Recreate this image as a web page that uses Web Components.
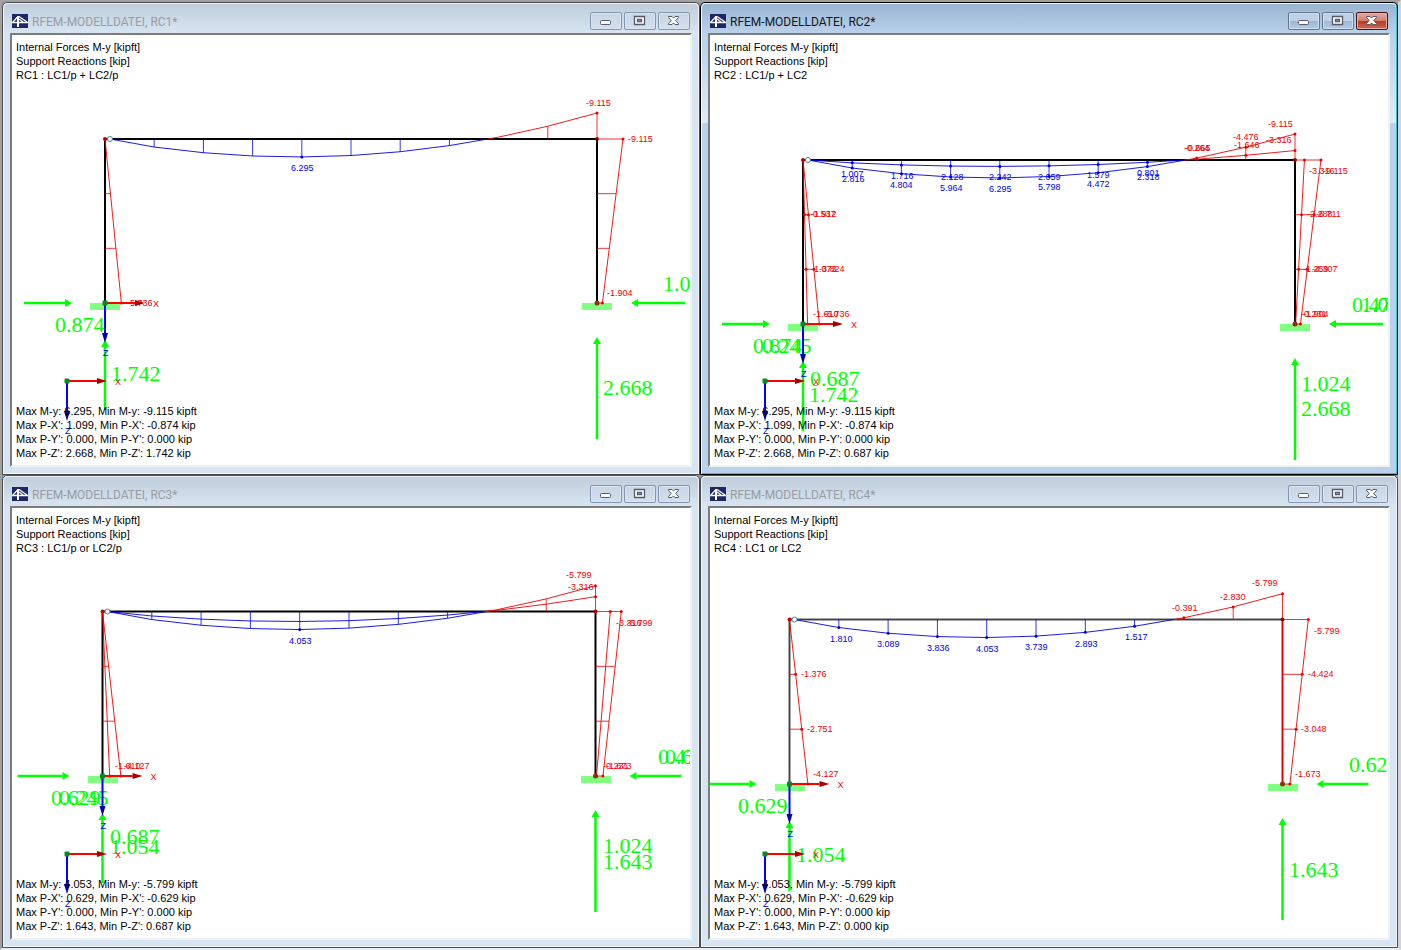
<!DOCTYPE html>
<html lang="en">
<head>
<meta charset="utf-8">
<title>RFEM – Result combinations</title>
<style>
  body {
    margin: 0;
    font: 11px/14px "Liberation Sans", Arial, sans-serif;
    color: #000;
  }
</style>
</head>
<body>
<mdi-desktop>
  <mdi-window heading="RFEM-MODELLDATEI, RC1*">
    <force-diagram slot="drawing" model="RC1"></force-diagram>
    <info-lines slot="top">
      <div>Internal Forces M-y [kipft]</div>
      <div>Support Reactions [kip]</div>
      <div>RC1 : LC1/p + LC2/p</div>
    </info-lines>
    <info-lines slot="bottom">
      <div>Max M-y: 6.295, Min M-y: -9.115 kipft</div>
      <div>Max P-X': 1.099, Min P-X': -0.874 kip</div>
      <div>Max P-Y': 0.000, Min P-Y': 0.000 kip</div>
      <div>Max P-Z': 2.668, Min P-Z': 1.742 kip</div>
    </info-lines>
  </mdi-window>
  <mdi-window heading="RFEM-MODELLDATEI, RC2*" active>
    <force-diagram slot="drawing" model="RC2"></force-diagram>
    <info-lines slot="top">
      <div>Internal Forces M-y [kipft]</div>
      <div>Support Reactions [kip]</div>
      <div>RC2 : LC1/p + LC2</div>
    </info-lines>
    <info-lines slot="bottom">
      <div>Max M-y: 6.295, Min M-y: -9.115 kipft</div>
      <div>Max P-X': 1.099, Min P-X': -0.874 kip</div>
      <div>Max P-Y': 0.000, Min P-Y': 0.000 kip</div>
      <div>Max P-Z': 2.668, Min P-Z': 0.687 kip</div>
    </info-lines>
  </mdi-window>
  <mdi-window heading="RFEM-MODELLDATEI, RC3*">
    <force-diagram slot="drawing" model="RC3"></force-diagram>
    <info-lines slot="top">
      <div>Internal Forces M-y [kipft]</div>
      <div>Support Reactions [kip]</div>
      <div>RC3 : LC1/p or LC2/p</div>
    </info-lines>
    <info-lines slot="bottom">
      <div>Max M-y: 4.053, Min M-y: -5.799 kipft</div>
      <div>Max P-X': 0.629, Min P-X': -0.629 kip</div>
      <div>Max P-Y': 0.000, Min P-Y': 0.000 kip</div>
      <div>Max P-Z': 1.643, Min P-Z': 0.687 kip</div>
    </info-lines>
  </mdi-window>
  <mdi-window heading="RFEM-MODELLDATEI, RC4*">
    <force-diagram slot="drawing" model="RC4"></force-diagram>
    <info-lines slot="top">
      <div>Internal Forces M-y [kipft]</div>
      <div>Support Reactions [kip]</div>
      <div>RC4 : LC1 or LC2</div>
    </info-lines>
    <info-lines slot="bottom">
      <div>Max M-y: 4.053, Min M-y: -5.799 kipft</div>
      <div>Max P-X': 0.629, Min P-X': -0.629 kip</div>
      <div>Max P-Y': 0.000, Min P-Y': 0.000 kip</div>
      <div>Max P-Z': 1.643, Min P-Z': 0.000 kip</div>
    </info-lines>
  </mdi-window>
</mdi-desktop>

<template id="desktop-tpl">
  <style>
    :host {
      display: grid;
      grid-template-columns: repeat(2, minmax(0, 1fr));
      grid-template-rows: repeat(2, minmax(0, 1fr));
      box-sizing: border-box;
      height: 100vh;
      border: 2px solid #a0a0a0;
      border-right: 3px solid #d2d4dc;
      border-bottom-color: #eeeeee;
      background: #8d959e;
    }
  </style>
  <slot></slot>
</template>

<template id="window-tpl">
  <style>
    :host {
      --edge: #4c4c4c;
      --shine: #eef4fa;
      --bar-top: #bfcddb;
      --bar-end: #d7e4f2;
      --frame: #d7e4f2;
      --side: linear-gradient(var(--frame), var(--frame));
      --caption: #999ca0;
      display: flex;
      flex-direction: column;
      box-sizing: border-box;
      min-width: 0;
      min-height: 0;
      padding: 0 7px 7px;
      border: 1px solid var(--edge);
      border-radius: 5px 5px 0 0;
      box-shadow: inset 0 0 0 1px var(--shine);
      background: var(--side) top / 100% 120px no-repeat, var(--frame);
    }
    :host([active]) {
      --edge: #000000;
      --bar-top: #99b4d1;
      --bar-end: #b9d1ea;
      --frame: #b9d1ea;
      --side: linear-gradient(#99b4d1, #b9d1ea 32px, #dfeaf6);
      --caption: #101820;
      box-shadow: inset 1px 1px 0 0 #f4f8fc, inset -1px -1px 0 0 #26c6dc;
    }
    header {
      display: flex;
      align-items: flex-start;
      gap: 2px;
      box-sizing: border-box;
      flex: none;
      height: 30px;
      margin: 0 -6px;
      padding: 9px 8px 0 8px;
      border-radius: 4px 4px 0 0;
      background: linear-gradient(var(--bar-top), var(--bar-end));
      box-shadow: inset 0 1px 0 0 var(--shine);
    }
    .logo { flex: none; width: 16px; height: 14px; margin: 2px 2px 0 0; }
    h2 {
      flex: 1;
      min-width: 0;
      margin: 0;
      overflow: hidden;
      white-space: nowrap;
      font: 12px/20px Roboto, "Open Sans", sans-serif;
      color: var(--caption);
    }
    main {
      display: grid;
      flex: 1;
      grid-template: minmax(0, 1fr) / minmax(0, 1fr);
      min-height: 0;
      margin: 0;
      border: 2px solid;
      border-color: #7c7c7c #f1f1f1 #f1f1f1 #7c7c7c;
      background: #fff;
      overflow: hidden;
    }
    ::slotted(force-diagram) { grid-area: 1 / 1; }
    .notes {
      grid-area: 1 / 1;
      display: flex;
      flex-direction: column;
      justify-content: space-between;
      padding: 5px 4px;
      z-index: 1;
    }
  </style>
  <header>
    <svg class="logo" viewBox="0 0 16 14" aria-hidden="true">
      <rect width="16" height="14" fill="#1f2566"/>
      <path d="M0.500 8.500L6 2.500M7 2.500L15 8M7 5L11 8" stroke="#fff" stroke-width="1.200" fill="none"/>
      <path d="M0 8.500H16" stroke="#fff" stroke-width="1.500"/>
      <path d="M6 2V13" stroke="#fff" stroke-width="2"/>
    </svg>
    <h2></h2>
    <caption-button kind="minimize"></caption-button>
    <caption-button kind="restore"></caption-button>
    <caption-button kind="close"></caption-button>
  </header>
  <main>
    <slot name="drawing"></slot>
    <div class="notes"><slot name="top"></slot><slot name="bottom"></slot></div>
  </main>
</template>

<template id="info-tpl">
  <style>
    :host { display: block; white-space: nowrap; }
  </style>
  <slot></slot>
</template>

<template id="button-tpl">
  <style>
    :host { display: block; flex: none; }
    button {
      display: block;
      box-sizing: border-box;
      width: 32px;
      height: 18px;
      padding: 0;
      border: 1px solid #8496b2;
      border-radius: 2px;
      background: linear-gradient(#c7d5e4, #d3e0ee);
      box-shadow: inset 0 0 0 1px #d9e4f0;
    }
    :host([hot]) button {
      border-color: #64748c;
      background: linear-gradient(#bdd0e5 48%, #9bb7d4 52%, #b3cce6);
      box-shadow: inset 0 0 0 1px #cfdff0;
    }
    :host([hot][kind="close"]) button {
      border-color: #43141a;
      background: linear-gradient(#e0a297 10%, #d4806f 48%, #b83b22 52%, #cf6a50);
      box-shadow: inset 0 0 0 1px #e3aea4;
    }
    svg { display: block; width: 30px; height: 16px; }
  </style>
  <button type="button"></button>
</template>

<template id="diagram-tpl">
  <style>
    :host { display: block; min-width: 0; min-height: 0; }
    svg { display: block; width: 100%; height: 100%; }
    text { font: 9px "Liberation Sans", Arial, sans-serif; }
    .r { fill: #f00000; }
    .b { fill: #0000f0; }
    .g { fill: #00ff00; font: 22px "Liberation Serif", "Times New Roman", serif; }
  </style>
</template>

<script>
const stamp = (host, id) => {
  const root = host.attachShadow({ mode: "open" });
  root.append(document.getElementById(id).content.cloneNode(true));
  return root;
};

class MdiDesktop extends HTMLElement {
  constructor() { super(); stamp(this, "desktop-tpl"); }
}

class InfoLines extends HTMLElement {
  constructor() { super(); stamp(this, "info-tpl"); }
}

const GLYPHS = {
  minimize: '<rect x="9.500" y="7.500" width="10" height="4" rx="1" fill="#fff" stroke="#555a6c"/>',
  restore: '<path fill="#fff" fill-rule="evenodd" stroke="#555a6c" stroke-width="1.300" d="M9.500 3.500h10v8h-10zM12.500 6.500h4v2h-4z"/>',
  close: '<path fill="#fff" stroke="#555a6c" stroke-linejoin="round" d="M9.500 3.500H13L14.500 5L16 3.500H19.500V4.500L16.700 7.500L19.500 10.500V11.500H16L14.500 10L13 11.500H9.500V10.500L12.300 7.500L9.500 4.500z"/>'
};

class CaptionButton extends HTMLElement {
  constructor() { super(); this.root = stamp(this, "button-tpl"); }
  connectedCallback() {
    const kind = this.getAttribute("kind");
    const button = this.root.querySelector("button");
    button.setAttribute("aria-label", kind);
    button.innerHTML = `<svg viewBox="0 0 30 16" aria-hidden="true">${GLYPHS[kind]}</svg>`;
  }
}

class MdiWindow extends HTMLElement {
  constructor() { super(); this.root = stamp(this, "window-tpl"); }
  connectedCallback() {
    this.root.querySelector("h2").textContent = this.getAttribute("heading");
    for (const b of this.root.querySelectorAll("caption-button"))
      b.toggleAttribute("hot", this.hasAttribute("active"));
  }
}

/* Beam moments at the ten stations after the hinge, in kipft */
const FULL = [2.816, 4.804, 5.964, 6.295, 5.798, 4.472, 2.318, -0.665, -4.476, -9.115];
const LIVE = [1.810, 3.089, 3.836, 4.053, 3.739, 2.893, 1.517, -0.391, -2.830, -5.799];
const DEAD = [1.007, 1.716, 2.128, 2.242, 2.059, 1.579, 0.801, -0.264, -1.646, -3.316];

/* left: moment at the foot; right: moments at the head and the foot */
const MODELS = {
  RC1: {
    x: 93, y: 104, span: 492, height: 164, scale: 2.85,
    curves: [{ beam: FULL, left: 5.736, right: [9.115, 1.904] }],
    tails: [-81, 88],
    labels: {
      b: [[279, 136, "6.295"]],
      r: [[574, 71, "-9.115"], [616, 107, "-9.115"], [595, 261, "-1.904"], [115, 271, "-5.736"]],
      g: [[43, 297, "0.874"], [99, 346, "1.742"], [591, 360, "2.668"], [651, 256, "1.099"]]
    }
  },
  RC2: {
    x: 93, y: 125, span: 492, height: 164, scale: 2.85, dots: true,
    curves: [{ beam: FULL, left: 5.736, right: [9.115, 1.904] }, { beam: DEAD, left: 1.610, right: [3.316, 0.231] }],
    tails: [-81, 88],
    labels: {
      b: [[131, 142, "1.007"], [132, 147, "2.816"], [181, 144, "1.716"], [180, 153, "4.804"],
          [231, 145, "2.128"], [230, 156, "5.964"], [279, 145, "2.242"], [279, 157, "6.295"],
          [328, 145, "2.059"], [328, 155, "5.798"], [377, 143, "1.579"], [377, 152, "4.472"],
          [427, 141, "0.801"], [427, 145, "2.318"]],
      r: [[474, 116, "-0.264"], [475, 116, "-0.665"], [523, 105, "-4.476"], [524, 113, "-1.646"],
          [558, 92, "-9.115"], [556, 108, "-3.316"], [599, 139, "-3.316"], [613, 139, "-9.115"],
          [597, 182, "-2.288"], [606, 182, "-6.711"], [593, 237, "-1.259"], [602, 237, "-4.307"],
          [591, 282, "-0.231"], [593, 282, "-1.904"], [100, 182, "-0.537"], [101, 182, "-1.912"],
          [101, 237, "-1.073"], [109, 237, "-3.824"], [103, 282, "-1.610"], [114, 282, "-5.736"]],
      g: [[43, 318, "0.874"], [52, 318, "0.245"], [100, 351, "0.687"], [99, 367, "1.742"],
          [591, 356, "1.024"], [591, 381, "2.668"], [642, 277, "0.477"], [651, 277, "1.099"]]
    }
  },
  RC3: {
    x: 90.5, y: 103.5, span: 493, height: 164.5, scale: 4.45,
    curves: [{ beam: LIVE, left: 4.127, right: [5.799, 1.673] }, { beam: DEAD, left: 1.610, right: [3.316, 0.231] }],
    tails: [-85, 86],
    labels: {
      b: [[277, 136, "4.053"]],
      r: [[554, 70, "-5.799"], [556, 82, "-3.316"], [604, 118, "-3.316"], [615, 118, "-5.799"],
          [591, 261, "-0.231"], [594, 261, "-1.673"], [103, 261, "-1.610"], [112, 261, "-4.127"]],
      g: [[39, 297, "0.629"], [47, 297, "0.245"], [98, 336, "0.687"], [98, 346, "1.054"],
          [591, 345, "1.024"], [591, 361, "1.643"], [646, 256, "0.477"], [653, 256, "0.629"]]
    }
  },
  RC4: {
    x: 79.5, y: 111.5, span: 493, height: 164.5, scale: 4.45, dots: true, member: "#d80000",
    curves: [{ beam: LIVE, left: 4.127, right: [5.799, 1.673] }],
    tails: [-85, 86],
    labels: {
      b: [[120, 134, "1.810"], [167, 139, "3.089"], [217, 143, "3.836"], [266, 144, "4.053"],
          [315, 142, "3.739"], [365, 139, "2.893"], [415, 132, "1.517"]],
      r: [[462, 103, "-0.391"], [510, 92, "-2.830"], [542, 78, "-5.799"], [604, 126, "-5.799"],
          [598, 169, "-4.424"], [591, 224, "-3.048"], [585, 269, "-1.673"],
          [91, 169, "-1.376"], [97, 224, "-2.751"], [103, 269, "-4.127"]],
      g: [[28, 305, "0.629"], [86, 354, "1.054"], [579, 369, "1.643"], [639, 264, "0.629"]]
    }
  }
};

const RED = "#ee0000", BLUE = "#0000e6", GREEN = "#00ff00";

const line = (x1, y1, x2, y2, color, width = 1) =>
  `<path d="M${x1} ${y1}L${x2} ${y2}" stroke="${color}" stroke-width="${width}"/>`;
const poly = (points, color) =>
  `<polyline points="${points.map(p => p.join()).join(" ")}" fill="none" stroke="${color}" stroke-width="0.900"/>`;
const dot = (x, y, color, size = 3) =>
  `<circle cx="${x}" cy="${y}" r="${size / 2}" fill="${color}"/>`;

/* Shaft with a filled head; the tip lies at (x2, y2) */
const arrow = (x1, y1, x2, y2, color, head = color, length = 7, half = 4) => {
  const d = Math.hypot(x2 - x1, y2 - y1), ux = (x2 - x1) / d, uy = (y2 - y1) / d;
  const bx = x2 - ux * length, by = y2 - uy * length;
  return line(x1, y1, bx, by, color, head === color ? 2.5 : 2) +
    `<path fill="${head}" d="M${x2} ${y2}L${bx - uy * half} ${by + ux * half}L${bx + uy * half} ${by - ux * half}z"/>`;
};

const axes = (x, y) =>
  arrow(x, y, x + 40, y, "#ff0000", "#a80000", 10, 3) +
  arrow(x, y, x, y + 40, "#0000ff", "#0000a8", 10, 3) +
  `<rect x="${x - 2.5}" y="${y - 2.5}" width="5" height="5" rx="1" fill="#0a8a20"/>` +
  `<text class="r" x="${x + 48}" y="${y + 4}">X</text><text class="b" x="${x - 2}" y="${y + 53}">Z</text>`;

class ForceDiagram extends HTMLElement {
  constructor() { super(); this.root = stamp(this, "diagram-tpl"); }
  connectedCallback() {
    const name = this.getAttribute("model");
    const m = MODELS[name];
    const { x, y, span, height: h, scale: s } = m;
    const right = x + span, foot = y + h, step = span / 10;
    let out = "";

    for (const fx of [x, right])
      out += `<rect x="${Math.round(fx) - 15}" y="${Math.round(foot)}" width="30" height="7" fill="#80ff80"/>`;
    out += arrow(x + m.tails[0], foot, x - 33, foot, GREEN);
    out += arrow(right + m.tails[1], foot, right + 34, foot, GREEN);
    out += arrow(x, foot + 107, x, foot + 37, GREEN);
    out += arrow(right, foot + 136, right, foot + 34, GREEN);

    const frame = `M${x} ${foot}V${y}H${right}V${foot}`;
    out += m.member
      ? `<path d="${frame}" fill="none" stroke="#a9a9a9" stroke-width="3"/><path d="${frame}" fill="none" stroke="${m.member}"/>`
      : `<path d="${frame}" fill="none" stroke="#000" stroke-width="2"/>`;

    m.curves.forEach((c, index) => {
      const pts = c.beam.map((v, i) => [x + step * (i + 1), y + v * s]);
      const a = c.beam[6], b = c.beam[7];
      const zero = [x + step * (7 + a / (a - b)), y];
      out += poly([[x + 5, y], ...pts.slice(0, 7), zero], BLUE);
      out += poly([zero, ...pts.slice(7)], RED);
      pts.forEach(([px, py], i) => {
        const color = i < 7 ? BLUE : RED;
        if (index === 0 && i !== 7) out += line(px, y, px, py, color, 0.8);
        if (m.dots || (i === 3 && index === 0) || i === 9) out += dot(px, py, color);
      });
      const [top, bottom] = c.right;
      out += poly([[x, y], [x + c.left * s, foot]], RED);
      out += poly([[right + top * s, y], [right + bottom * s, foot]], RED);
      for (let k = 0; k < 4; k++) {
        const ly = y + h * k / 3;
        const lx = x + c.left * s * k / 3;
        const rx = right + (top + (bottom - top) * k / 3) * s;
        if (index === 0) {
          if (k) out += line(x, ly, lx, ly, RED, 0.8);
          out += line(right, ly, rx, ly, RED, 0.8);
        }
        if (m.dots || k === 0 || k === 3) out += dot(rx, ly, RED);
        if ((m.dots && k) || k === 3) out += dot(lx, ly, RED);
      }
    });

    out += dot(right, y, "#a00000", 4) + dot(right, foot, "#903010", 5) + dot(x, y, "#c00000", 4);
    out += `<circle cx="${x + 5}" cy="${y}" r="2.5" fill="#fff" stroke="#3a8a8a"/>`;
    for (const kind of ["r", "b"])
      for (const [tx, ty, t] of m.labels[kind]) out += `<text class="${kind}" x="${tx}" y="${ty}">${t}</text>`;
    for (const [tx, ty, t] of m.labels.g) out += `<text class="g" x="${tx}" y="${ty}">${t}</text>`;
    out += axes(x, foot) + axes(55, 346);

    this.root.innerHTML += `<svg viewBox="0 0 678 430" preserveAspectRatio="xMinYMin meet" role="img" aria-label="Moment diagram ${name}">${out}</svg>`;
  }
}

customElements.define("mdi-desktop", MdiDesktop);
customElements.define("info-lines", InfoLines);
customElements.define("caption-button", CaptionButton);
customElements.define("mdi-window", MdiWindow);
customElements.define("force-diagram", ForceDiagram);
</script>
</body>
</html>
